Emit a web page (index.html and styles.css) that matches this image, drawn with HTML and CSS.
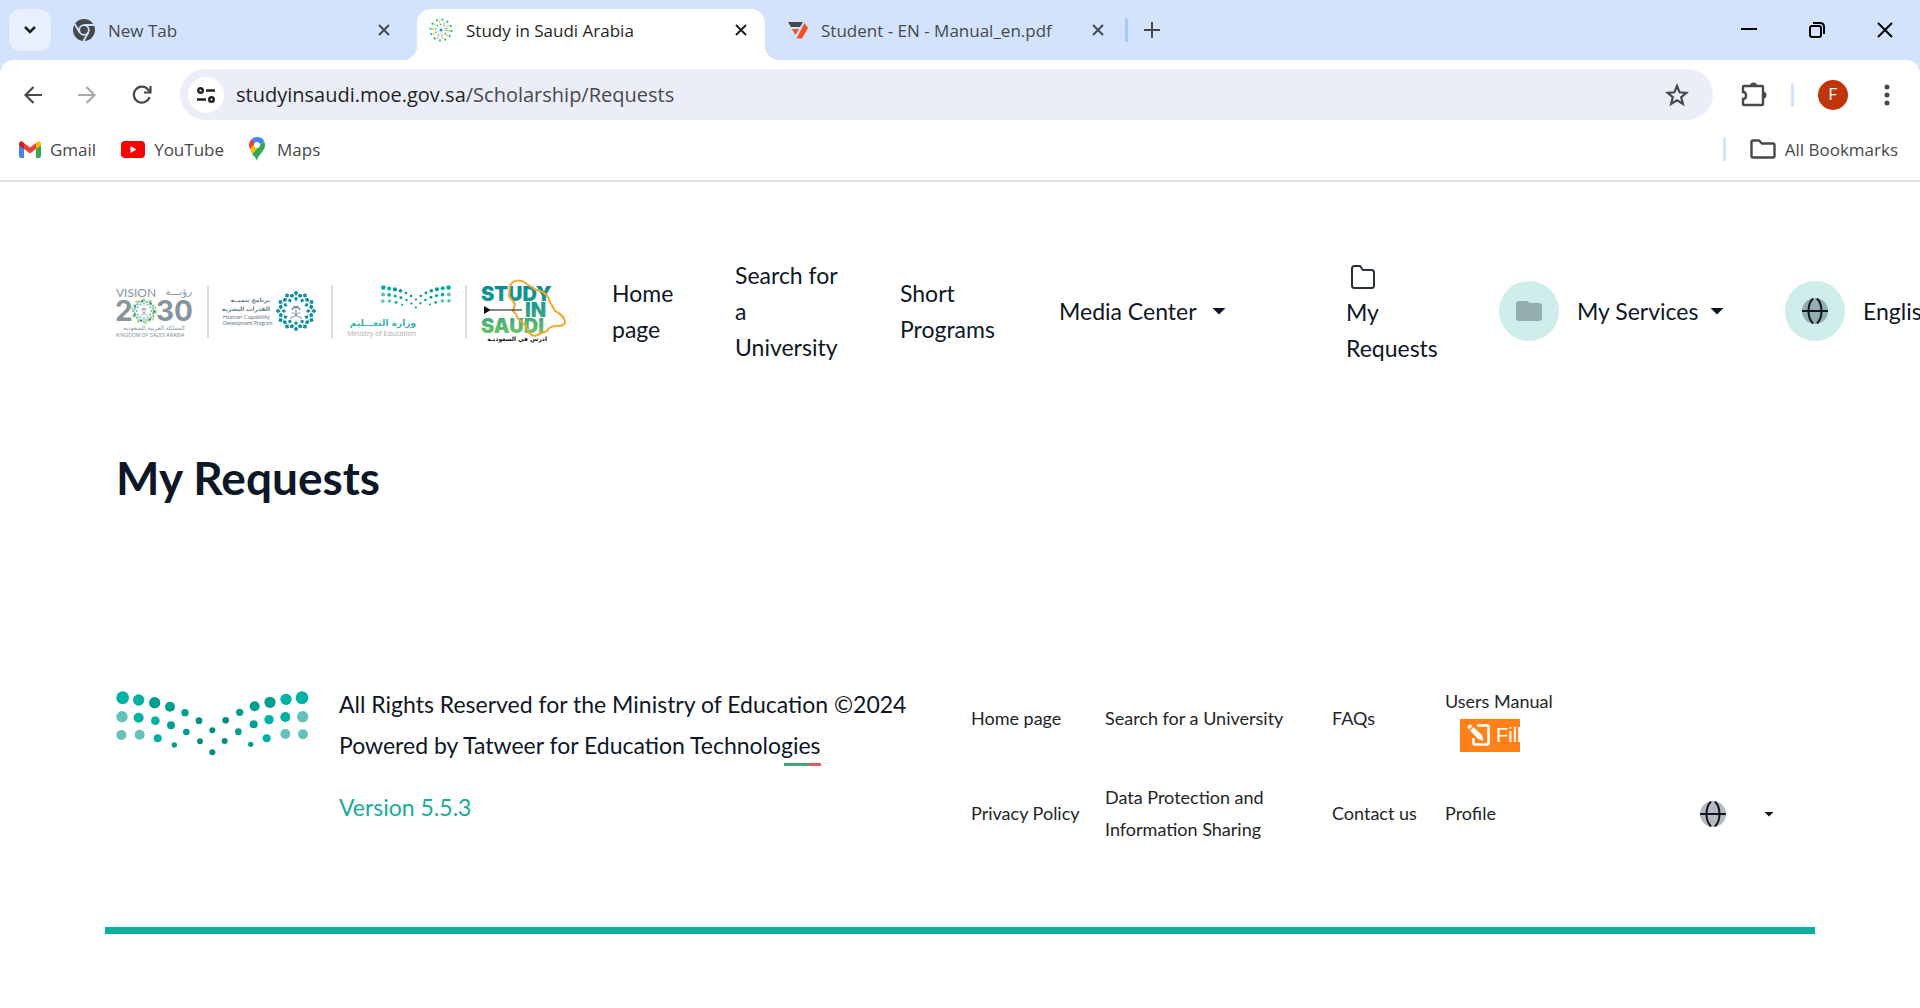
FILE: index.html
```html
<!DOCTYPE html>
<html lang="en">
<head>
<meta charset="utf-8">
<title>Study in Saudi Arabia</title>
<link rel="stylesheet" href="styles.css">
</head>
<body>
<svg class="defs" aria-hidden="true">
  <defs>
    <g id="spoke">
      <path d="M0-20.500l2.300 2.600-2.300 2.600-2.300-2.600zM-3.600-17.500l2 2.400-2.200 1.800-1.800-2.400zM3.600-17.500l-2 2.400 2.200 1.800 1.800-2.400zM0-14.500l2 2.300-2 2.300-2-2.300z"/>
    </g>
    <g id="rosette">
      <use href="#spoke"/><use href="#spoke" transform="rotate(30)"/><use href="#spoke" transform="rotate(60)"/><use href="#spoke" transform="rotate(90)"/><use href="#spoke" transform="rotate(120)"/><use href="#spoke" transform="rotate(150)"/><use href="#spoke" transform="rotate(180)"/><use href="#spoke" transform="rotate(210)"/><use href="#spoke" transform="rotate(240)"/><use href="#spoke" transform="rotate(270)"/><use href="#spoke" transform="rotate(300)"/><use href="#spoke" transform="rotate(330)"/>
    </g>
    <g id="palm">
      <path d="M0-1v6M-3-2q1-4 3-2 2-2 3 2M-4-1q2-4 4-2 2-2 4 2" fill="none" stroke="#84959e" stroke-width="1.400"/>
      <path d="M-6 7q6-1 10-6M6 7q-6-1-10-6" fill="none" stroke="#84959e" stroke-width="1"/>
    </g>
    <g id="ministry-dots">
      <g fill="#00b1a5"><circle cx="67" cy="82" r="19"/><circle cx="115" cy="89" r="17"/><circle cx="115" cy="142" r="15"/><circle cx="165" cy="151" r="13"/><circle cx="172" cy="204" r="12"/><circle cx="605" cy="82" r="19"/><circle cx="557" cy="87" r="17"/><circle cx="555" cy="140" r="15"/><circle cx="506" cy="148" r="14"/><circle cx="499" cy="204" r="12"/></g>
      <g fill="#009e8e"><circle cx="163" cy="97" r="17"/><circle cx="209" cy="109" r="15"/><circle cx="212" cy="165" r="12"/><circle cx="254" cy="127" r="11"/><circle cx="258" cy="185" r="10"/><circle cx="222" cy="224" r="8"/><circle cx="509" cy="96" r="17"/><circle cx="463" cy="108" r="15"/><circle cx="460" cy="162" r="12"/><circle cx="418" cy="126" r="11"/><circle cx="414" cy="184" r="10"/><circle cx="451" cy="222" r="8"/></g>
      <g fill="#008f7f"><circle cx="296" cy="151" r="10"/><circle cx="299" cy="213" r="9"/><circle cx="336" cy="180" r="9"/><circle cx="336" cy="246" r="9"/><circle cx="376" cy="150" r="10"/><circle cx="373" cy="212" r="9"/></g>
      <g fill="#63c3b8"><circle cx="65" cy="139" r="17"/><circle cx="63" cy="194" r="15"/><circle cx="118" cy="193" r="15"/><circle cx="607" cy="139" r="17"/><circle cx="608" cy="192" r="15"/><circle cx="555" cy="191" r="15"/></g>
    </g>
    <g id="globe">
      <circle cx="13" cy="13" r="13" fill="#0e1726" opacity=".3"/>
      <path d="M0 13h26M11 .5c-6 6-6 19 0 25M15 .5c6 6 6 19 0 25" fill="none" stroke="#0e1726" stroke-width="2"/>
    </g>
    <g id="cross"><path d="M1 1l10 10M11 1L1 11" fill="none" stroke="currentColor" stroke-width="2"/></g>
  </defs>
</svg>

<div class="browser">
  <div class="tabstrip">
    <button class="tab-search" aria-label="Search tabs"><svg width="14" height="10" viewBox="0 0 14 10"><path d="M2 2l5 5 5-5" fill="none" stroke="#1f1f1f" stroke-width="2.500"/></svg></button>
    <div class="tab tab-first">
      <svg width="22" height="22" viewBox="0 0 22 22"><circle cx="11" cy="11" r="11" fill="#46494c"/><circle cx="11" cy="11" r="4.800" fill="#46494c" stroke="#d3e3fd" stroke-width="1.800"/><path d="M11 6h10M6.700 13.500l-5-8.500M15.300 13.500L10.500 22" stroke="#d3e3fd" stroke-width="1.800"/></svg>
      <span class="tab-title">New Tab</span>
      <button class="tab-close" aria-label="Close tab"><svg width="12" height="12"><use href="#cross"/></svg></button>
    </div>
    <div class="tab tab-active">
      <svg width="24" height="24" viewBox="-12 -12 24 24" fill="none"><circle r="10.500" stroke="#2fb6b0" stroke-width="2" stroke-dasharray="2 3.500"/><circle r="8" stroke="#c8d936" stroke-width="2" stroke-dasharray="1.500 3.500"/><circle r="5.500" stroke="#3c63a8" stroke-width="1.500" stroke-dasharray="1 2.500"/><circle r="3.200" stroke="#8fcfe0" stroke-dasharray="1 1.500"/><circle r="1.500" fill="#16a596"/></svg>
      <span class="tab-title">Study in Saudi Arabia</span>
      <button class="tab-close" aria-label="Close tab"><svg width="12" height="12"><use href="#cross"/></svg></button>
    </div>
    <div class="tab tab-last">
      <svg width="20" height="18" viewBox="0 0 20 18"><path d="M0 1h15l-3 5H3z" fill="#46494c"/><path d="M4 8h7l-3.500 6z" fill="#f4511e"/><path d="M16.500 2L20 7l-6 10.500H8.500z" fill="#f4511e"/></svg>
      <span class="tab-title">Student - EN - Manual_en.pdf</span>
      <button class="tab-close" aria-label="Close tab"><svg width="12" height="12"><use href="#cross"/></svg></button>
    </div>
    <span class="tab-rule"></span>
    <button class="new-tab" aria-label="New tab"><svg width="16" height="16"><path d="M8 0v16M0 8h16" stroke="#46494c" stroke-width="2"/></svg></button>
    <div class="window-buttons">
      <button aria-label="Minimize"><svg width="16" height="16"><path d="M0 7h16" stroke="#000" stroke-width="2"/></svg></button>
      <button aria-label="Restore"><svg width="16" height="16" fill="none" stroke="#000" stroke-width="2"><rect x="1" y="4" width="11" height="11" rx="2"/><path d="M4 1h7q4 0 4 4v7"/></svg></button>
      <button aria-label="Close"><svg width="16" height="16"><path d="M1 1l14 14M15 1L1 15" stroke="#000" stroke-width="2"/></svg></button>
    </div>
  </div>

  <div class="toolbar">
    <button aria-label="Back"><svg width="18" height="18" fill="none" stroke="#46494c" stroke-width="2.200"><path d="M18 9H2M9.500 1L1.500 9l8 8"/></svg></button>
    <button aria-label="Forward"><svg width="18" height="18" fill="none" stroke="#a9abad" stroke-width="2.200"><path d="M0 9h16M8.500 1l8 8-8 8"/></svg></button>
    <button aria-label="Reload"><svg width="20" height="20" fill="none" stroke="#46494c" stroke-width="2.200"><path d="M17.500 12a8 8 0 1 1-1.500-7.500L18.500 7M18.500 1v6.500H12"/></svg></button>
    <div class="omnibox">
      <button class="site-info" aria-label="View site information"><svg width="18" height="16" fill="none" stroke="#1f1f1f" stroke-width="2.400"><circle cx="3.500" cy="3.500" r="2.300"/><path d="M9 3.500h9M0 12.500h9"/><circle cx="14.500" cy="12.500" r="2.300"/></svg></button>
      <div class="url" role="textbox" aria-label="Address">studyinsaudi.moe.gov.sa<span>/Scholarship/Requests</span></div>
      <button aria-label="Bookmark this tab"><svg width="24" height="24" viewBox="0 0 24 24"><path d="M12 3l2.600 6.300 6.800.5-5.200 4.400 1.700 6.700L12 17.300l-5.900 3.600 1.700-6.700-5.200-4.400 6.800-.5z" fill="none" stroke="#46494c" stroke-width="2.200"/></svg></button>
    </div>
    <button class="extensions" aria-label="Extensions"><svg width="26" height="26" viewBox="0 0 26 26"><path d="M3 4h18q1 0 1 1v17q0 1-1 1H3q-1 0-1-1v-5c4 0 4-7 0-7V5q0-1 1-1z" fill="none" stroke="#46494c" stroke-width="2.400"/><path d="M9 4a3.500 3.500 0 0 1 7 0zM22 9.500a3.500 3.500 0 0 1 0 7z" fill="#46494c"/></svg></button>
    <span class="toolbar-rule"></span>
    <button class="avatar" aria-label="Profile">F</button>
    <button class="menu" aria-label="Menu"><svg width="6" height="22" fill="#46494c"><circle cx="3" cy="3" r="2.500"/><circle cx="3" cy="11" r="2.500"/><circle cx="3" cy="19" r="2.500"/></svg></button>
  </div>

  <div class="bookmarks">
    <a href="#"><svg width="22" height="17" viewBox="0 0 22 17"><path d="M0 3v12q0 2 2 2h3V6z" fill="#4285f4"/><path d="M17 6v11h3q2 0 2-2V3z" fill="#34a853"/><path d="M17 2v6l5-3.500V3c0-2.500-2.500-3.500-4-2z" fill="#fbbc04"/><path d="M5 2v6l6 4.500L17 8V2l-6 4.500z" fill="#ea4335"/><path d="M0 3v1.500L5 8V2L4 1C2.500-.5 0 .5 0 3z" fill="#c5221f"/></svg>Gmail</a>
    <a href="#"><svg width="24" height="17" viewBox="0 0 24 17"><rect width="24" height="17" rx="4" fill="#f00"/><path d="M9.500 5v7l6-3.500z" fill="#fff"/></svg>YouTube</a>
    <a href="#" class="maps"><svg width="16" height="24" viewBox="0 0 16 24"><path d="M8 24c0-6 8-9 8-16q0-2-1-4L3 17c3 3 4 4 5 7z" fill="#34a853"/><path d="M1 12l2 5 8-9-5-3z" fill="#fbbc04"/><path d="M2 2.500Q0 5 0 8q0 2 1 4l7-8z" fill="#ea4335"/><path d="M2 2.800Q4 0 8 0q5 0 7 4l-5 5-4-3z" fill="#4285f4"/><circle cx="8" cy="8" r="3" fill="#fff"/></svg>Maps</a>
    <span class="toolbar-rule"></span>
    <a href="#" class="all-bookmarks"><svg width="26" height="20" viewBox="0 0 26 20"><path d="M3 1.500h6l3 3h11q1.500 0 1.500 1.500v11q0 1.500-1.500 1.500H3q-1.500 0-1.500-1.500V3Q1.500 1.500 3 1.500z" fill="none" stroke="#46494c" stroke-width="2.400"/></svg>All Bookmarks</a>
  </div>
</div>

<header class="site-header">
  <a href="#" class="logos" aria-label="Study in Saudi">
    <svg width="450" height="68" viewBox="116 278 450 68">
      <defs><linearGradient id="fade" gradientUnits="userSpaceOnUse" x1="0" y1="288" x2="0" y2="334"><stop offset="0" stop-color="#078a9b"/><stop offset=".5" stop-color="#2a9f86"/><stop offset="1" stop-color="#6cc06a"/></linearGradient></defs>
      <g class="l-grey">
        <text class="l-vision" x="116" y="298">VISION</text>
        <text class="l-ar-vision" x="192" y="296" text-anchor="end">رؤيـــة</text>
        <text class="l-2030" x="115" y="322">2</text>
        <text class="l-2030" x="156" y="322">30</text>
        <text class="l-tiny" x="154" y="331" text-anchor="middle">المملكة العربية السعودية</text>
        <text class="l-kingdom" x="116" y="338">KINGDOM OF SAUDI ARABIA</text>
      </g>
      <g transform="translate(144 312) scale(.6)"><use href="#rosette" fill="#71bfa9"/><circle r="20" fill="none" stroke="#c8d936" stroke-width="3" stroke-dasharray="4 9"/><circle r="17" fill="none" stroke="#2c6ea5" stroke-width="3" stroke-dasharray="3 12"/><use href="#palm"/></g>
      <path d="M208 286v53M332 286v53M466 286v53" stroke="#cfcfcf" stroke-width="1.500"/>
      <g class="l-dark">
        <text class="l-ar" x="270" y="303" text-anchor="end">برنامج تنميــة</text>
        <text class="l-ar" x="270" y="312" text-anchor="end">القدرات البشرية</text>
        <text class="l-human" x="223" y="320">Human Capability</text>
        <text class="l-program" x="223" y="326">Development Program</text>
      </g>
      <g transform="translate(296 312)"><use href="#rosette" fill="#0e8f9d"/><use href="#palm"/></g>
      <svg x="381" y="286" width="70" height="24" viewBox="48 62 577 195"><use href="#ministry-dots"/></svg>
      <text class="l-ministry-ar" x="416" y="327" text-anchor="end">وزارة التعـــليم</text>
      <text class="l-ministry" x="347" y="337">Ministry of Education</text>
      <g class="l-study" fill="url(#fade)">
        <text x="481" y="302">STUDY</text><text x="525" y="318">IN</text><text x="481" y="334">SAUDI</text>
      </g>
      <path d="M510 287q3-7 12-5l14 9q11 1 14 12l5 9q9 4 10 11 0 4-8 4-8 0-10 5l-12 5q-5-1-7-5-2-7-10-12-2-6-5-8l2-7-6-8z" fill="none" stroke="#f9a72b" stroke-width="2"/>
      <path d="M484 307v8l6-3.500h32v-1h-32z" fill="#111"/>
      <text class="l-study-ar" x="547" y="342" text-anchor="end">ادرس في السعوديـة</text>
    </svg>
  </a>
  <nav class="nav">
    <a href="#" class="n-home">Home page</a>
    <a href="#" class="n-search">Search for<br>a<br>University</a>
    <a href="#" class="n-short">Short Programs</a>
    <button class="n-media">Media Center<i class="caret"></i></button>
    <a href="#" class="n-requests"><svg width="34" height="24" viewBox="0 0 34 24"><path d="M8.500 1H14l3 4h8.500q2.500 0 2.500 2.500v13q0 2.500-2.500 2.500h-17Q6 23 6 20.500v-17Q6 1 8.500 1z" fill="none" stroke="#263238" stroke-width="2"/></svg>My Requests</a>
    <button class="n-services"><span class="disc"><svg width="26" height="20" viewBox="0 0 26 20"><path d="M3 0h8l3 2h9q3 0 3 3v12q0 3-3 3H3q-3 0-3-3V3q0-3 3-3z" fill="#94adb0"/></svg></span>My Services<i class="caret"></i></button>
    <button><span class="disc"><svg width="26" height="26"><use href="#globe"/></svg></span>English<i class="caret"></i></button>
  </nav>
</header>

<main>
  <h1>My Requests</h1>
</main>

<footer class="site-footer">
  <svg class="footer-logo" width="193" height="65" viewBox="48 62 577 195" role="img" aria-label="Ministry of Education"><use href="#ministry-dots"/></svg>
  <div class="legal">
    <p>All Rights Reserved for the Ministry of Education ©2024</p>
    <p>Powered by <a href="#">Tatweer for Education Technologies<i></i></a></p>
    <p class="version">Version 5.5.3</p>
  </div>
  <div class="links">
    <a href="#">Home page</a>
    <a href="#">Search for a University</a>
    <a href="#">FAQs</a>
    <div class="manual"><a href="#">Users Manual</a>
      <button class="fill"><svg width="24" height="22" viewBox="0 0 24 22" fill="none" stroke="#fff"><path d="M11 1.500h10q1.500 0 1.500 1.500v16q0 1.500-1.500 1.500H9q-1.500 0-1.500-1.500v-5" stroke-width="2.600"/><path d="M1 3l3-3 2.500 2-3.500 3.500zM4 6.500L7.500 3 16 11l1.500 6-5.500-2z" fill="#fff" stroke="none"/></svg>Fill</button>
    </div>
    <a href="#">Privacy Policy</a>
    <a href="#">Data Protection and Information Sharing</a>
    <a href="#">Contact us</a>
    <a href="#">Profile</a>
  </div>
  <button class="footer-lang" aria-label="Language"><svg width="26" height="26"><use href="#globe"/></svg><i class="caret"></i></button>
</footer>
</body>
</html>
```
FILE: styles.css
```css
* { box-sizing: border-box; }
body {
  margin: 0;
  background: #fff;
  color: #0e1726;
  font-family: Lato, "DejaVu Sans", sans-serif;
  overflow-x: hidden;
}
a { color: inherit; text-decoration: none; }
button { border: 0; padding: 0; background: none; font: inherit; color: inherit; }
svg { display: block; flex: none; }
.defs { position: absolute; width: 0; height: 0; }

/* Browser frame */
.browser {
  background: #d3e3fd;
  border-bottom: 2px solid #dedfe0;
  font-family: "Open Sans", sans-serif;
  font-size: 17px;
  color: #46494c;
}
.tabstrip { display: flex; align-items: center; height: 60px; padding-left: 9px; }
.tab-search {
  display: grid;
  place-items: center;
  width: 42px;
  height: 42px;
  border-radius: 12px;
  background: #eaf1fe;
}
.tab { display: flex; align-items: center; gap: 13px; height: 51px; align-self: flex-end; padding-bottom: 9px; white-space: nowrap; }
.tab-close { display: grid; place-items: center; width: 24px; height: 24px; margin-left: auto; }
.tab-first { width: 366px; padding-left: 22px; padding-right: 21px; }
.tab-active {
  position: relative;
  width: 348px;
  padding-left: 12px;
  padding-right: 12px;
  background: #fff;
  border-radius: 14px 14px 0 0;
  color: #1f1f1f;
}
.tab-active::before, .tab-active::after {
  content: "";
  position: absolute;
  bottom: 0;
  width: 14px;
  height: 14px;
}
.tab-active::before { left: -14px; background: radial-gradient(circle at 0 0, transparent 14px, #fff 14px); }
.tab-active::after { right: -14px; background: radial-gradient(circle at 100% 0, transparent 14px, #fff 14px); }
.tab-last { width: 360px; padding-left: 23px; padding-right: 15px; }
.tab-rule { width: 3px; height: 24px; border-radius: 2px; background: #a8c7fa; }
.new-tab { margin-left: 16px; }
.window-buttons { display: flex; gap: 52px; margin-left: auto; padding-right: 27px; }

.toolbar {
  display: flex;
  align-items: center;
  height: 69px;
  padding: 0 30px 0 24px;
  background: #fff;
  border-radius: 14px 14px 0 0;
}
.toolbar > button:nth-child(2), .toolbar > button:nth-child(3) { margin-left: 36px; }
.omnibox {
  display: flex;
  align-items: center;
  flex: 1;
  height: 51px;
  margin-left: 28px;
  padding: 0 24px 0 8px;
  border-radius: 26px;
  background: #ebeef8;
}
.site-info { display: grid; place-items: center; width: 36px; height: 36px; border-radius: 50%; background: #fff; }
.url { flex: 1; padding-left: 12px; font-size: 20px; color: #1f1f1f; }
.url span { color: #46494c; }
.extensions { margin-left: 28px; }
.toolbar-rule { width: 3px; height: 24px; border-radius: 2px; background: #d3e3fd; }
.toolbar .toolbar-rule { margin: 0 24px; }
.avatar { width: 30px; height: 30px; border-radius: 50%; background: #c0350c; color: #fff; font: 16px Roboto, sans-serif; }
.menu { margin-left: 36px; }

.bookmarks { display: flex; align-items: center; height: 51px; padding: 0 22px 11px 19px; background: #fff; }
.bookmarks a { display: flex; align-items: center; gap: 9px; margin-right: 25px; }
.bookmarks .maps { gap: 12px; }
.bookmarks .toolbar-rule { margin-left: auto; margin-right: 24px; }
.bookmarks .all-bookmarks { margin-right: 0; }

/* Site header */
.site-header { display: flex; align-items: center; height: 258px; padding-left: 116px; overflow: hidden; }
.logos { flex: none; margin-right: 46px; }
.nav { display: flex; flex: none; align-items: center; gap: 61px; font-size: 23px; line-height: 36px; }
.nav button { display: flex; align-items: center; white-space: nowrap; }
.n-home { width: 62px; }
.n-search { width: 104px; }
.n-short { width: 98px; }
.n-media { width: 167px; margin-right: 59px; }
.n-requests { width: 92px; padding-top: 9px; }
.n-requests svg { margin-bottom: 5px; }
.n-services { width: 225px; }
.caret {
  width: 14px;
  height: 7px;
  margin-left: auto;
  background: currentColor;
  clip-path: polygon(0 0, 100% 0, 50% 100%);
}
.disc { display: grid; place-items: center; width: 60px; height: 60px; margin-right: 18px; border-radius: 50%; background: #cfeeeb; }

.l-grey { fill: #84959e; }
.l-dark { fill: #6d7b86; }
.l-vision { font: 12px Lato, sans-serif; }
.l-ar-vision { font: 10px "DejaVu Sans", sans-serif; }
.l-2030 { font: bold 28px Inter, sans-serif; }
.l-tiny { font: 6px "DejaVu Sans", sans-serif; }
.l-kingdom { font: 5px Inter, sans-serif; }
.l-ar { font: bold 6px "DejaVu Sans", sans-serif; }
.l-human { font: 6px Lato, sans-serif; }
.l-program { font: 5px Lato, sans-serif; }
.l-ministry-ar { font: bold 9px "DejaVu Sans", sans-serif; fill: #35b5a8; }
.l-ministry { font: 7px "Open Sans", sans-serif; fill: #a9adb0; }
.l-study { font: 900 20px Inter, sans-serif; }
.l-study-ar { font: bold 6px "DejaVu Sans", sans-serif; fill: #111; }

main { padding: 2px 116px 0; }
h1 { margin: 0; font-size: 46px; line-height: 72px; font-weight: bold; }

/* Footer */
.site-footer {
  display: flex;
  align-items: flex-start;
  margin: 156px 105px 0;
  padding: 14px 11px 0;
  height: 264px;
  border-bottom: 7px solid #0aafa0;
}
.footer-logo { margin-top: 7px; }
.legal { width: 632px; padding-left: 30px; font-size: 23px; line-height: 41px; white-space: nowrap; }
.legal p { margin: 0; }
.legal a { position: relative; }
.legal a i {
  position: absolute;
  right: 0;
  bottom: -7px;
  width: 37px;
  height: 3px;
  background: linear-gradient(90deg, #4a9f78 67%, #e05a5a 67%);
}
.legal .version { margin-top: 21px; color: #17ab9c; }
.links {
  display: grid;
  grid-template-columns: 110px 203px 89px 112px;
  grid-template-rows: 66px 64px;
  column-gap: 24px;
  row-gap: 30px;
  align-items: center;
  padding: 1px 0 0 30px;
  font-size: 18px;
  line-height: 32px;
  color: #212529;
}
.manual { display: flex; flex-direction: column; }
.fill {
  display: flex;
  align-items: center;
  gap: 6px;
  width: 60px;
  height: 33px;
  margin: 2px 0 0 15px;
  padding-left: 6px;
  overflow: hidden;
  background: #ff8118;
  color: #fff;
  font: 20px "Liberation Sans", sans-serif;
}
.footer-lang { display: flex; align-items: center; margin: 117px 30px 0 auto; }
.footer-lang .caret { width: 10px; height: 5px; margin-left: 38px; }
```
